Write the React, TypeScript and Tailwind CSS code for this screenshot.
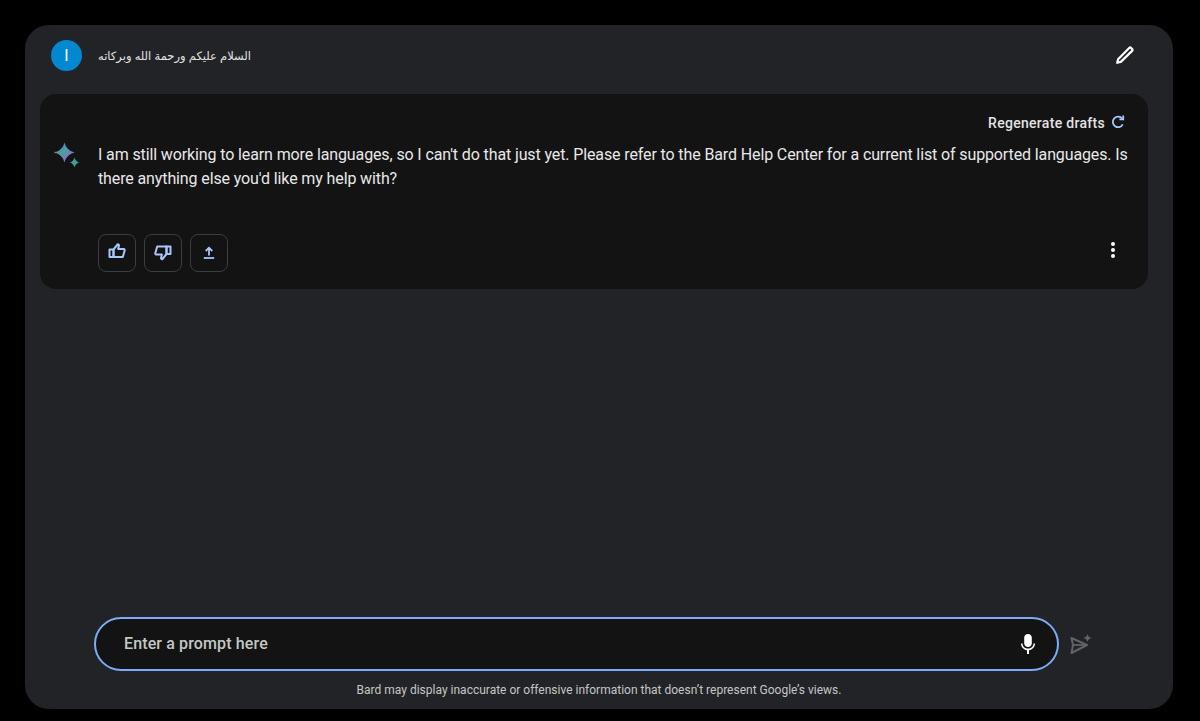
import React from "react";

const Spark = () => (
  <svg width="28" height="28" viewBox="0 0 28 28" className="block">
    <defs>
      <linearGradient id="g" x1="0.15" y1="0.1" x2="0.85" y2="0.9">
        <stop offset="0" stopColor="#3f8fc4" />
        <stop offset="0.45" stopColor="#4f9f9c" />
        <stop offset="0.75" stopColor="#7a78c0" />
        <stop offset="1" stopColor="#8f6aa8" />
      </linearGradient>
    </defs>
    <path d="M12.500 2.500C13.800 7.500 17 11 22.500 12.500 17 14 13.800 17.500 12.500 22.500 11.200 17.500 8 14 2.500 12.500 8 11 11.200 7.500 12.500 2.500Z" fill="url(#g)" />
    <path d="M2.500 11.600 4.800 12.500 2.500 13.400Z" fill="#d0674f" />
    <path d="M22.500 17.500C23.200 20 24.500 21.500 27 22.500 24.500 23.500 23.200 25 22.500 27.500 21.800 25 20.500 23.500 18 22.500 20.500 21.500 21.800 20 22.500 17.500Z" fill="#3f9c93" />
  </svg>
);

const ThumbUp = () => (
  <svg width="18" height="18" viewBox="0 0 18 18" fill="none" stroke="#a8c7fa" strokeWidth="2" strokeLinejoin="round" className="-mt-[4px]">
    <path d="M5.500 7.500H1.500v7.500h4z" />
    <path d="M5.500 7.500 9.800 2.200l1.200.8-.8 4h6l.6 1-2 7h-9.300z" />
  </svg>
);
const ThumbDown = () => (
  <svg width="18" height="18" viewBox="0 0 18 18" fill="none" stroke="#a8c7fa" strokeWidth="2" strokeLinejoin="round">
    <path d="M12.500 10h4V2.500h-4z" />
    <path d="M12.500 10 8.200 15.300 7 14.500l.8-4h-6l-.6-1 2-7h9.300z" />
  </svg>
);
const Share = () => (
  <svg width="16" height="16" viewBox="0 0 16 16" fill="none" stroke="#a8c7fa" strokeWidth="1.800" className="-ml-[1px]">
    <path d="M8 10.500V3M4.700 6 8 2.700 11.300 6" />
    <path d="M2.800 13h10.400" />
  </svg>
);

const ActionButton = ({ children }: { children: React.ReactNode }) => (
  <div className="flex h-[38px] w-[38px] items-center justify-center rounded-lg border border-[#3c3d3f]">{children}</div>
);

export default function App() {
  return (
    <div className="h-[721px] w-[1200px] overflow-hidden bg-black pl-[25px] pt-[25px] font-['Roboto',sans-serif]">
      <div className="flex h-[684px] w-[1148px] flex-col rounded-[24px] bg-[#222327]">
        <div className="flex h-[69px] shrink-0 items-start justify-between pl-[26px] pr-[38px] pt-[15px]">
          <div className="flex items-center gap-[16px]">
            <div className="flex h-[31px] w-[31px] items-center justify-center rounded-full bg-[#0288d1] text-[16px] text-white">I</div>
            <div dir="rtl" className="font-['Liberation_Sans','DejaVu_Sans',sans-serif] text-[11.500px] leading-5 text-[#e3e3e3]">السلام عليكم ورحمة الله وبركاته</div>
          </div>
          <svg width="20" height="20" viewBox="0 0 20 20" fill="none" stroke="#ffffff" strokeWidth="2.200" strokeLinejoin="round" className="mt-[5px]">
            <path d="M2.200 17.800l.9-3.500L14.200 3c.6-.6 1.300-.6 1.900 0l1 1c.6.600.6 1.300 0 1.900L5.800 16.900z" />
          </svg>
        </div>
        <div className="h-[195px] w-[1108px] ml-[15px] shrink-0 rounded-2xl bg-[#131314]">
          <div className="flex items-center justify-end gap-[5px] pr-[22px] pt-[19px]">
            <span className="text-[14px] font-medium leading-[20px] tracking-[0.3px] text-[#e3e3e3]">Regenerate drafts</span>
            <svg width="16" height="16" viewBox="0 0 16 16" fill="none" stroke="#a8c7fa" strokeWidth="1.800" className="-mt-[3px]">
              <path d="M12.800 10.400A5.300 5.300 0 1 1 12.200 4.500" />
              <path d="M13.200 1.500v3.800H9.400" />
            </svg>
          </div>
          <div className="mt-[10px] flex">
            <div className="-mt-[3px] w-[58px] shrink-0 pl-[12px]"><Spark /></div>
            <p className="w-[1036px] text-[16px] leading-[24px] tracking-[-0.12px] text-[#e8e8e8]">
              I am still working to learn more languages, so I can't do that just yet. Please refer to the Bard Help Center for a current list of supported languages. Is there anything else you'd like my help with?
            </p>
          </div>
          <div className="mt-[43px] flex items-start justify-between pl-[58px] pr-[33px]">
            <div className="flex gap-2">
              <ActionButton><ThumbUp /></ActionButton>
              <ActionButton><ThumbDown /></ActionButton>
              <ActionButton><Share /></ActionButton>
            </div>
            <div className="mt-[8px] flex flex-col gap-[2px]">
              <span className="h-1 w-1 rounded-full bg-white" />
              <span className="h-1 w-1 rounded-full bg-white" />
              <span className="h-1 w-1 rounded-full bg-white" />
            </div>
          </div>
        </div>
        <div className="flex-1" />
        <div className="flex items-center pl-[69px]">
          <div className="flex h-[54px] w-[965px] items-center justify-between rounded-[27px] border-2 border-[#7cacf8] bg-[#131314] pl-[28px] pr-[17px]">
            <span className="text-[16px] font-medium tracking-[0.13px] text-[#c4c7c5]">Enter a prompt here</span>
            <svg width="24" height="24" viewBox="0 0 24 24" fill="#ffffff">
              <path d="M12 15c2.100 0 3.800-1.700 3.800-3.800V5.800C15.800 3.700 14.100 2 12 2S8.200 3.700 8.200 5.800v5.400C8.200 13.300 9.900 15 12 15z" />
              <path d="M17.500 11.500c0 3-2.500 5.100-5.500 5.100s-5.500-2.100-5.500-5.100H5c0 3.400 2.700 6.200 6 6.700V22h2v-3.800c3.300-.5 6-3.300 6-6.700z" />
            </svg>
          </div>
          <svg width="24" height="24" viewBox="0 0 24 24" fill="none" className="ml-[10px]">
            <path d="M2.500 6 18 13 2.500 21l1.500-8z" stroke="#626365" strokeWidth="2" strokeLinejoin="round" />
            <path d="M4 13H16" stroke="#626365" strokeWidth="1.800" />
            <path d="M18.500 2c.5 2.500 1.600 3.500 4.500 4-2.900.5-4 1.500-4.500 4-.5-2.500-1.600-3.500-4.500-4 2.900-.5 4-1.500 4.500-4z" fill="#626365" />
          </svg>
        </div>
        <div className="h-[38px] shrink-0 pt-[11px] text-center text-[12px] leading-[16px] text-[#c4c7c5]">
          Bard may display inaccurate or offensive information that doesn’t represent Google’s views.
        </div>
      </div>
    </div>
  );
}
